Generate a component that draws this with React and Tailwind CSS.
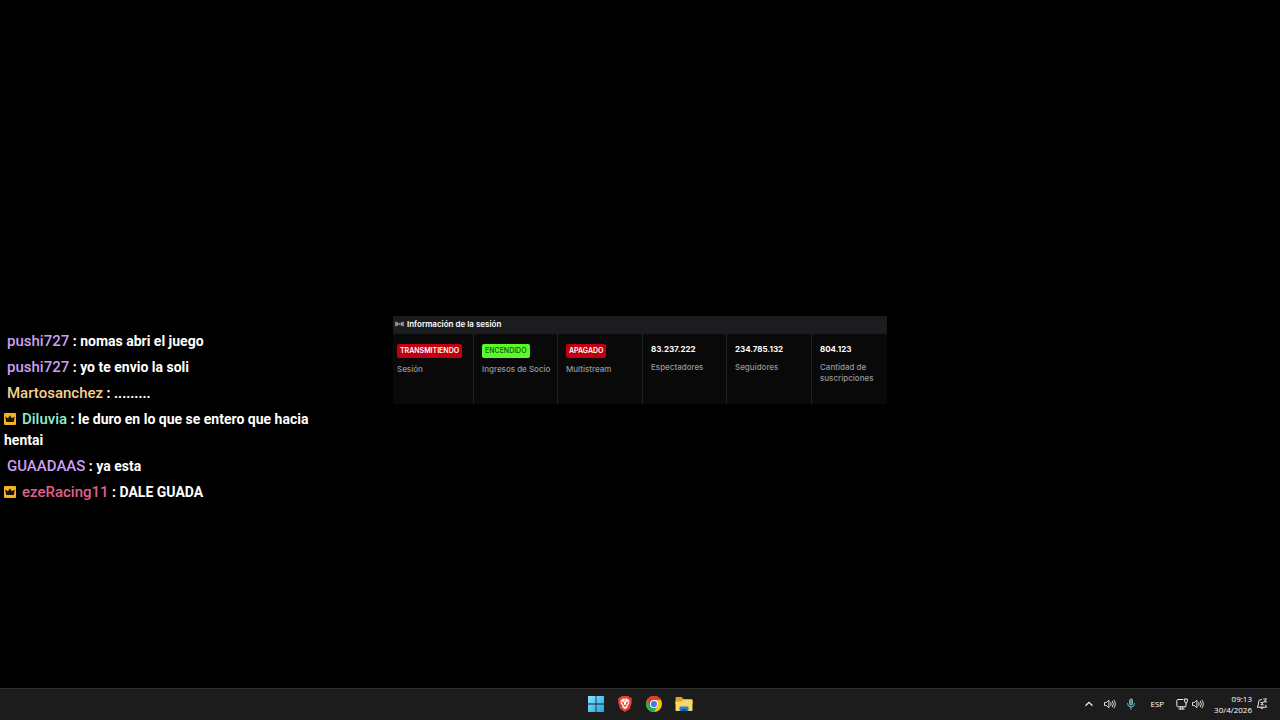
import React from "react";

const messages = [
  { user: "pushi727", color: "text-[#c9a0f0]", text: "nomas abri el juego" },
  { user: "pushi727", color: "text-[#c9a0f0]", text: "yo te envio la soli" },
  { user: "Martosanchez", color: "text-[#f5d08c]", text: "........." },
  { user: "Diluvia", color: "text-[#8ff0d0]", text: "le duro en lo que se entero que hacia hentai", crown: true },
  { user: "GUAADAAS", color: "text-[#cf9ff2]", text: "ya esta" },
  { user: "ezeRacing11", color: "text-[#e0608a]", text: "DALE GUADA", crown: true },
];

const stats = [
  { badge: "TRANSMITIENDO", tone: "bg-[#c00010] text-white font-semibold", label: "Sesión" },
  { badge: "ENCENDIDO", tone: "bg-[#5cf92a] text-[#0d5a10] font-medium", label: "Ingresos de Socio" },
  { badge: "APAGADO", tone: "bg-[#c00010] text-white font-semibold", label: "Multistream" },
  { value: "83.237.222", label: "Espectadores" },
  { value: "234.785.132", label: "Seguidores" },
  { value: "804.123", label: "Cantidad de suscripciones" },
];

function CrownBadge() {
  return (
    <svg viewBox="0 0 12 12" className="mr-1.5 inline-block size-3 align-[-1px]" aria-hidden="true">
      <rect width="12" height="12" rx="1" fill="#f3b322" />
      <path d="M1.2 3.4 3.9 5.2 6 2.4l2.1 2.8 2.7-1.8-1 5.6H2.2z" fill="#1d1405" />
    </svg>
  );
}

function Chat() {
  return (
    <ul className="flex max-w-80 flex-col gap-[5px] pt-[114px] pl-1 font-['Roboto',sans-serif] text-[14px] leading-[21px] font-bold text-white">
      {messages.map(({ user, color, text, crown }, i) => (
        <li key={i}>
          {crown ? <CrownBadge /> : <span className="pl-[3px]" />}
          <span className={`text-[15px] font-medium ${color}`}>{user}</span> : {text}
        </li>
      ))}
    </ul>
  );
}

function SessionPanel() {
  return (
    <section className="font-['Inter',sans-serif] text-[8px]">
      <header className="flex h-[18px] items-center gap-[3px] bg-[#1b1c20] px-0.5 pb-0.5">
        <svg viewBox="0 0 9 8" className="h-2 w-[9px]" fill="none" stroke="#c8c9cc" aria-hidden="true">
          <path d="M1 1.8v4.4M8 1.8v4.4" strokeWidth="1.2" />
          <path d="M2.7 2.5v3M6.3 2.5v3" strokeWidth="1.2" />
          <circle cx="4.5" cy="4" r=".7" fill="#c8c9cc" stroke="none" />
        </svg>
        <h2 className="font-semibold text-white">Información de la sesión</h2>
      </header>
      <dl className="grid h-[70px] grid-cols-[80fr_84fr_85fr_84fr_85fr_76fr] bg-[#09090a]">
        {stats.map(({ badge, tone, value, label }) => (
          <div
            key={label}
            className="flex flex-col items-start border-l border-[#202124] pt-2.5 pl-2 first:border-l-0 first:pl-1"
          >
            {badge ? (
              <dd className={`rounded-xs px-[3px] text-[7px] leading-[14px] ${tone}`}>{badge}</dd>
            ) : (
              <dd className="leading-[10px] font-bold text-white">{value}</dd>
            )}
            <dt className={`font-medium text-[#96979e] leading-[11px] ${badge ? "mt-1.5" : "mt-2"}`}>{label}</dt>
          </div>
        ))}
      </dl>
    </section>
  );
}

function WindowsIcon() {
  return (
    <svg viewBox="0 0 16 16" className="size-4" aria-hidden="true">
      <defs>
        <linearGradient id="win" x1="0" y1="0" x2="1" y2="1">
          <stop offset="0" stopColor="#8be4fb" />
          <stop offset="1" stopColor="#1ea4ea" />
        </linearGradient>
      </defs>
      <path d="M0 0h7.6v7.6H0zM8.4 0H16v7.6H8.4zM0 8.4h7.6V16H0zM8.4 8.4H16V16H8.4z" fill="url(#win)" />
    </svg>
  );
}

function BraveIcon() {
  return (
    <svg viewBox="0 0 16 16" className="size-4" aria-hidden="true">
      <path d="M4.6 0h6.8l1.4 1.5 1.3-.1.9 2.2-.5 1.3.4 1.3-2 6.5L8 16l-4.9-3.3-2-6.5.4-1.3L1 3.6l.9-2.2 1.3.1z" fill="#e8402f" />
      <path d="m8 2.8 1.9-.4 2.6 2.4-.4 1.4.4 1.2-2.1 2 .3 1.5L8 13.2l-2.7-2.3.3-1.5-2.1-2 .4-1.2-.4-1.4 2.6-2.4z" fill="#fff" />
      <path d="m4.4 5.6 2.3.6.5 2.4.8.8.8-.8.5-2.4 2.3-.6-.9 1.8-1.5 1.5.3 1L8 11l-1.5-1.1.3-1-1.5-1.5zM7.5 3.4h1L8.2 6h-.4z" fill="#e8402f" />
    </svg>
  );
}

function ChromeIcon() {
  return (
    <svg viewBox="0 0 16 16" className="size-4" aria-hidden="true">
      <circle cx="8" cy="8" r="8" fill="#fbc116" />
      <path d="M8 8 1.07 4A8 8 0 0 0 8 16l3.4-6z" fill="#2da94f" />
      <path d="M8 8v-4h6.93A8 8 0 0 0 1.07 4l3.47 6z" fill="#e33b2e" />
      <circle cx="8" cy="8" r="4" fill="#fff" />
      <circle cx="8" cy="8" r="3.1" fill="#3c7de6" />
    </svg>
  );
}

function FolderIcon() {
  return (
    <svg viewBox="0 0 18 16" className="h-4 w-[18px]" aria-hidden="true">
      <path d="M.5 2a1 1 0 0 1 1-1h5l2 2h8a1 1 0 0 1 1 1v4H.5z" fill="#e0a22b" />
      <path d="M.5 5.5h6L8 4h9.5v10a1 1 0 0 1-1 1h-15a1 1 0 0 1-1-1z" fill="#fbd667" />
      <path d="M4.5 15v-3.5a1 1 0 0 1 1-1h7a1 1 0 0 1 1 1V15z" fill="#2382c9" />
      <path d="M6.5 13h5v2h-5z" fill="#125a99" />
    </svg>
  );
}

function SpeakerIcon() {
  return (
    <svg viewBox="0 0 13 12" className="size-3" fill="none" stroke="#ececec" strokeLinejoin="round" strokeLinecap="round" aria-hidden="true">
      <path d="M1 4.3h1.6L5.3 2v8L2.6 7.7H1zM7.3 4.4a2.6 2.6 0 0 1 0 3.2M9.1 3a5 5 0 0 1 0 6M10.8 1.8a7 7 0 0 1 0 8.4" />
    </svg>
  );
}

function MicIcon() {
  return (
    <svg viewBox="0 0 10 12" className="h-3 w-2.5" fill="none" stroke="#72bcc0" strokeLinecap="round" aria-hidden="true">
      <rect x="3.5" y="1" width="3" height="6" rx="1.5" fill="#3f8f94" />
      <path d="M1.5 5.5a3.5 3.5 0 0 0 7 0M5 9v2.2" />
    </svg>
  );
}

function NetworkIcon() {
  return (
    <svg viewBox="0 0 12 12" className="size-3" fill="none" stroke="#ececec" strokeLinejoin="round" strokeLinecap="round" aria-hidden="true">
      <path d="M7 1.5H1.8a1 1 0 0 0-1 1v5.3a1 1 0 0 0 1 1h7.4M3 11h5M4.3 9v2M6.7 9v2M10 5v2.8a1 1 0 0 1-1 1" />
      <path d="M8.7 1h2.6v2.6a1 1 0 0 1-2.6 0z" />
    </svg>
  );
}

function BellIcon() {
  return (
    <svg viewBox="0 0 12 12" className="size-3" fill="none" stroke="#ececec" strokeLinejoin="round" strokeLinecap="round" aria-hidden="true">
      <path d="M5.5 1.3a3.4 3.4 0 0 0-3.1 3.6v2L1.2 9.2h9.3L9.6 7.2M4.7 9.5c.2 1.7 2.4 1.7 2.6 0" />
      <path d="M7.7 1h3l-3 2.8h3M5 4.4h2.2L5 6.7h2.2" />
    </svg>
  );
}

const apps = [
  { name: "Inicio", Icon: WindowsIcon },
  { name: "Brave", Icon: BraveIcon },
  { name: "Chrome", Icon: ChromeIcon },
  { name: "Explorador de archivos", Icon: FolderIcon },
];

function Taskbar() {
  return (
    <footer className="grid h-8 grid-cols-[1fr_auto_1fr] items-center border-t border-[#303030] bg-[#1c1c1c] pb-0.5 font-['Open_Sans',sans-serif] text-[8px] font-medium text-white">
      <nav className="col-start-2 flex items-center gap-[13px] pl-px">
        {apps.map(({ name, Icon }) => (
          <button key={name} type="button" aria-label={name}>
            <Icon />
          </button>
        ))}
      </nav>
      <div className="flex items-center justify-end pr-3">
        <button type="button" aria-label="Mostrar iconos ocultos" className="mr-2.5">
          <svg viewBox="0 0 10 10" className="size-2.5" fill="none" stroke="#ececec" strokeWidth="1.3" aria-hidden="true">
            <path d="m1.5 6.8 3.5-3.5 3.5 3.5" />
          </svg>
        </button>
        <button type="button" aria-label="Sonido" className="mr-2.5">
          <SpeakerIcon />
        </button>
        <button type="button" aria-label="Micrófono" className="mr-3.5">
          <MicIcon />
        </button>
        <button type="button" className="mr-3">ESP</button>
        <button type="button" aria-label="Red y volumen" className="mr-2.5 flex gap-1">
          <NetworkIcon />
          <SpeakerIcon />
        </button>
        <button type="button" className="mr-1 text-right leading-[11px]">
          <time className="block">09:13</time>
          <time className="block">30/4/2026</time>
        </button>
        <button type="button" aria-label="Notificaciones">
          <BellIcon />
        </button>
      </div>
    </footer>
  );
}

export default function App() {
  return (
    <div className="flex min-h-screen flex-col bg-black">
      <main className="grid grow grid-cols-[1fr_494px_1fr] items-center pt-8">
        <Chat />
        <SessionPanel />
      </main>
      <Taskbar />
    </div>
  );
}
